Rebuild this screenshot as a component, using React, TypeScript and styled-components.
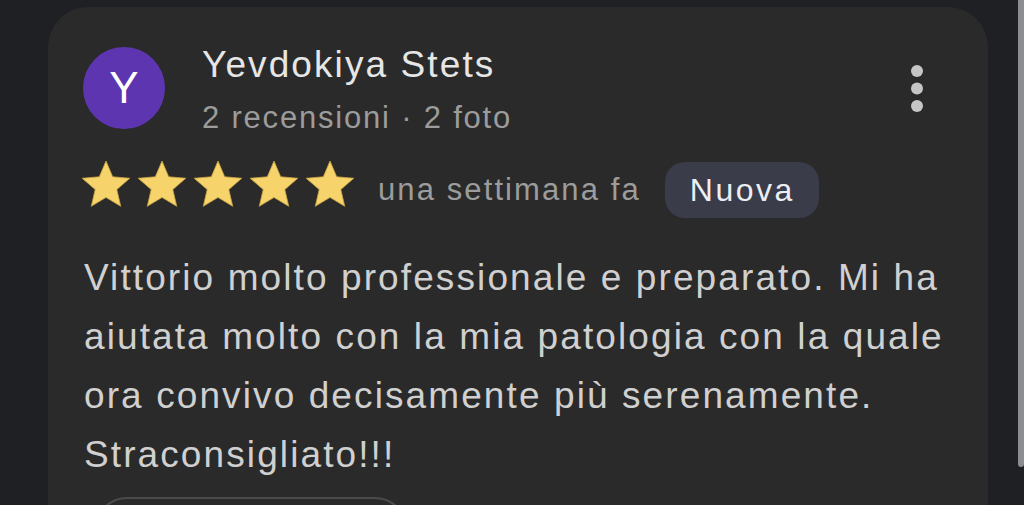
import React from 'react';
import styled, { createGlobalStyle } from 'styled-components';

const GlobalStyle = createGlobalStyle`
  html, body {
    margin: 0;
    padding: 0;
    height: 100%;
    overflow: hidden;
    background: #1f2023;
  }
  body {
    font-family: "Liberation Sans", Arial, Helvetica, sans-serif;
  }
`;

const Page = styled.div`
  position: relative;
  height: 505px;
  overflow: hidden;
  padding: 7px 0 0 48px;
  box-sizing: border-box;
  background: #1f2023;
`;

const ScrollThumb = styled.div`
  position: absolute;
  top: 0;
  right: 0;
  width: 6px;
  height: 467px;
  border-radius: 0 0 3px 3px;
  background: #8d8d8f;
`;

const Card = styled.div`
  width: 940px;
  height: 560px;
  box-sizing: border-box;
  padding: 40px 35px 0 35px;
  background: #2a2a2a;
  border-radius: 40px;
`;

const Header = styled.div`
  display: flex;
  align-items: flex-start;
`;

const Avatar = styled.div`
  width: 82px;
  height: 82px;
  flex: none;
  border-radius: 50%;
  background: #5e35b1;
  color: #ffffff;
  font-size: 44px;
  display: flex;
  align-items: center;
  justify-content: center;
`;

const Author = styled.div`
  margin: -3px 0 0 37px;
  display: flex;
  flex-direction: column;
`;

const Name = styled.div`
  font-size: 37px;
  line-height: 42px;
  letter-spacing: 2.1px;
  color: #e6e6e6;
`;

const Meta = styled.div`
  margin-top: 13px;
  font-size: 31px;
  line-height: 38px;
  letter-spacing: 1.8px;
  color: #9c9c9c;
`;

const MenuButton = styled.div`
  margin: 18px 30px 0 auto;
  display: flex;
`;

const RatingRow = styled.div`
  margin-top: 25px;
  display: flex;
  align-items: center;
  height: 56px;
`;

const Stars = styled.div`
  display: flex;
  gap: 8px;
  margin: 0 0 12px -1px;
`;

const When = styled.span`
  margin-left: 24px;
  font-size: 31px;
  letter-spacing: 2.1px;
  color: #9c9c9c;
`;

const Chip = styled.span`
  margin-left: 24px;
  height: 56px;
  padding: 0 24px 0 25px;
  display: flex;
  align-items: center;
  border-radius: 20px;
  background: #3a3c49;
  color: #eceef4;
  font-size: 32px;
  letter-spacing: 2.5px;
`;

const Body = styled.p`
  margin: 30px 0 0 1px;
  font-size: 37px;
  line-height: 59px;
  letter-spacing: 2.1px;
  color: #d0d0d0;
`;

const ActionButton = styled.div`
  margin: 13px 0 0 12px;
  width: 312px;
  height: 64px;
  box-sizing: border-box;
  border: 2px solid #4b4b4b;
  border-radius: 32px;
`;

const Star: React.FC = () => (
  <svg width="48" height="46" viewBox="2 2 20 19.3">
    <path
      d="M12 17.27L18.18 21l-1.64-7.03L22 9.24l-7.19-.61L12 2 9.19 8.63 2 9.24l5.46 4.73L5.82 21z"
      fill="#f6d36b"
      stroke="#c8a243"
      strokeWidth="0.35"
      strokeLinejoin="round"
    />
  </svg>
);

const Kebab: React.FC = () => (
  <svg width="12" height="47" viewBox="0 0 12 47">
    <circle cx="6" cy="6" r="6" fill="#c6c6c6" />
    <circle cx="6" cy="23.5" r="6" fill="#c6c6c6" />
    <circle cx="6" cy="41" r="6" fill="#c6c6c6" />
  </svg>
);

const App: React.FC = () => {
  return (
    <>
      <GlobalStyle />
      <Page>
        <Card>
          <Header>
            <Avatar>Y</Avatar>
            <Author>
              <Name>Yevdokiya Stets</Name>
              <Meta>2 recensioni · 2 foto</Meta>
            </Author>
            <MenuButton>
              <Kebab />
            </MenuButton>
          </Header>
          <RatingRow>
            <Stars>
              {[0, 1, 2, 3, 4].map((i) => (
                <Star key={i} />
              ))}
            </Stars>
            <When>una settimana fa</When>
            <Chip>Nuova</Chip>
          </RatingRow>
          <Body>
            Vittorio molto professionale e preparato. Mi ha aiutata molto con la mia patologia
            con la quale ora convivo decisamente più serenamente. Straconsigliato!!!
          </Body>
          <ActionButton />
        </Card>
        <ScrollThumb />
      </Page>
    </>
  );
};

export default App;
